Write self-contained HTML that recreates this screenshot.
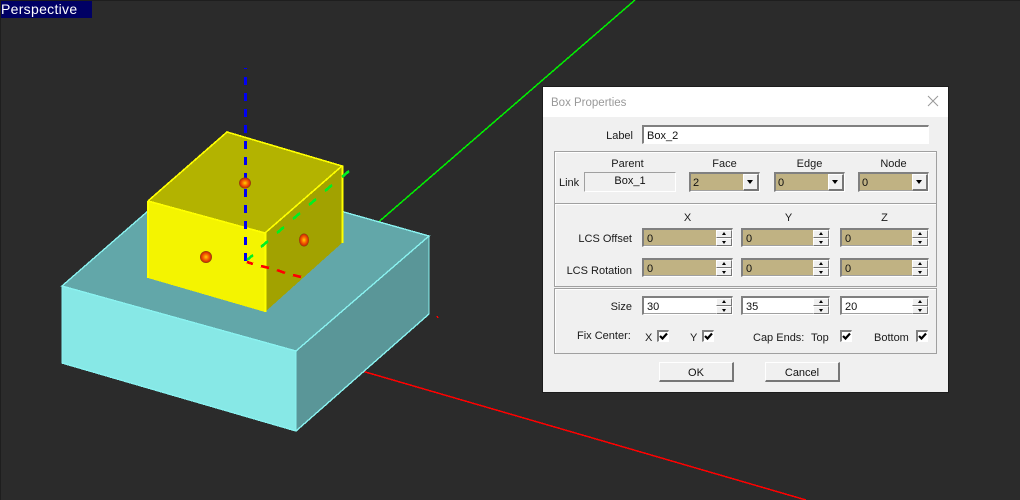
<!DOCTYPE html>
<html>
<head>
<meta charset="utf-8">
<style>
html,body{margin:0;padding:0;background:#2b2b2b}
#root{position:relative;width:1020px;height:500px;overflow:hidden;background:#2b2b2b;font-family:"Liberation Sans",sans-serif}
svg.scene{position:absolute;left:0;top:0}
.persp{position:absolute;left:1px;top:1px;width:91px;height:17px;background:#000064;color:#fff;font-size:14px;line-height:16px;letter-spacing:.3px;white-space:nowrap}
.dlg{position:absolute;left:543px;top:87px;width:405px;height:305px;background:#f0f0f0;box-shadow:0 0 0 1px #1c1c1c}
.title{position:absolute;left:0;top:0;width:405px;height:30px;background:#fff}
.title span{position:absolute;left:8px;top:9px;font-size:11.5px;line-height:14px;color:#999}
.t{position:absolute;font-size:11px;line-height:13px;color:#1a1a1a;white-space:nowrap}
.c{text-align:center}
.r{text-align:right}
.grp{position:absolute;box-sizing:border-box;border:1px solid #a0a0a0;box-shadow:inset 1px 1px 0 #fff}
.f{position:absolute;box-sizing:border-box;border-top:2px solid #808080;border-left:2px solid #808080;border-right:1px solid #fff;border-bottom:1px solid #fff;outline:0;font-size:11px;line-height:18px;color:#111;padding-left:3px;white-space:nowrap;overflow:hidden}
.sh{box-shadow:inset -1px -1px 0 #a0a0a0}
.tan{background:#c0b283}
.w{background:#fff}
.g{background:#f0f0f0}
.bt{position:absolute;box-sizing:border-box;background:#f0f0f0;border-top:1px solid #fff;border-left:1px solid #fff;border-right:1px solid #777;border-bottom:1px solid #777}
.dn:after{content:"";position:absolute;left:50%;top:50%;margin:-2px 0 0 -4px;border-left:3.5px solid transparent;border-right:3.5px solid transparent;border-top:4px solid #000}
.up2:after{content:"";position:absolute;left:50%;top:50%;margin:-2px 0 0 -2px;border-left:2px solid transparent;border-right:2px solid transparent;border-bottom:3px solid #000}
.dn2:after{content:"";position:absolute;left:50%;top:50%;margin:-1px 0 0 -2px;border-left:2px solid transparent;border-right:2px solid transparent;border-top:3px solid #000}
.cb{position:absolute;width:12px;height:12px;box-sizing:border-box;background:#fff;border-top:2px solid #808080;border-left:2px solid #808080;border-right:1px solid #fff;border-bottom:1px solid #fff}
.cb svg{position:absolute;left:0;top:0}
.btn{position:absolute;box-sizing:border-box;background:#f0f0f0;border-top:1px solid #fff;border-left:1px solid #fff;border-right:2px solid #777;border-bottom:2px solid #777;font-size:11px;line-height:20px;color:#111;text-align:center}
</style>
</head>
<body>
<div id="root">
<svg class="scene" width="1020" height="500" viewBox="0 0 1020 500">
  <rect x="0" y="0" width="1020" height="1" fill="#1e1e1e"/>
  <rect x="0" y="0" width="1" height="500" fill="#1e1e1e"/>
  <g shape-rendering="crispEdges">
    <line x1="300" y1="290" x2="635" y2="0" stroke="#00f000" stroke-width="1.5"/>
    <line x1="300" y1="353" x2="806" y2="500" stroke="#ff0000" stroke-width="1.5"/>
    <line x1="437" y1="316" x2="438" y2="318" stroke="#ff0000" stroke-width="1.5"/>
    <polygon points="195,170 429,236 296,351 62,286" fill="#62a7a9"/>
    <polygon points="62,286 296,351 296,431 62,363" fill="#87e8e6"/>
    <polygon points="296,351 429,236 429,314 296,431" fill="#5a9698"/>
  </g>
  <g fill="none" stroke="#8af2f0" stroke-width="1.4" shape-rendering="crispEdges">
    <polygon points="195,170 429,236 296,351 62,286"/>
    <polyline points="429,236 429,314 296,431 62,363 62,286"/>
    <line x1="296" y1="351" x2="296" y2="431"/>
  </g>
  <g shape-rendering="crispEdges">
    <polygon points="227,132 342,166 265,233 148,201" fill="#b3b300"/>
    <polygon points="148,201 265,233 265,312 148,278" fill="#f4f400"/>
    <polygon points="265,233 342,166 342,243 265,312" fill="#a2a200"/>
  </g>
  <g fill="none" stroke="#ffff00" stroke-width="1.6" shape-rendering="crispEdges">
    <polyline points="148,201 227,132 342,166 265,233 148,201"/>
    <line x1="265.5" y1="233" x2="265.5" y2="312"/>
    <line x1="342.5" y1="166" x2="342.5" y2="243"/>
    <line x1="148" y1="201" x2="148" y2="278"/>
  </g>
  <line x1="245.5" y1="68" x2="245.5" y2="262" stroke="#0000f4" stroke-width="3" stroke-dasharray="8 8" stroke-dashoffset="7" shape-rendering="crispEdges"/>
  <g stroke="#00f020" stroke-width="2.6" fill="none" shape-rendering="crispEdges">
    <line x1="247" y1="260" x2="253" y2="255"/>
    <line x1="261" y1="247" x2="268" y2="241"/>
    <line x1="277" y1="233" x2="284" y2="227"/>
    <line x1="293" y1="219" x2="300" y2="213"/>
    <line x1="309" y1="205" x2="316" y2="199"/>
    <line x1="325" y1="191" x2="332" y2="185"/>
    <line x1="342" y1="177" x2="349" y2="171"/>
  </g>
  <g stroke="#ff0000" stroke-width="2.6" fill="none" shape-rendering="crispEdges">
    <line x1="247" y1="262" x2="253" y2="264"/>
    <line x1="261" y1="266" x2="269" y2="268"/>
    <line x1="277" y1="270" x2="285" y2="273"/>
    <line x1="293" y1="275" x2="301" y2="277"/>
  </g>
  <defs>
    <radialGradient id="b"><stop offset="0" stop-color="#ffd000"/><stop offset=".5" stop-color="#f56000"/><stop offset=".85" stop-color="#d03000"/><stop offset="1" stop-color="#6e4a10"/></radialGradient>
  </defs>
  <ellipse cx="245" cy="183" rx="6" ry="5.5" fill="url(#b)"/>
  <ellipse cx="206" cy="257" rx="6" ry="6" fill="url(#b)"/>
  <ellipse cx="304" cy="240" rx="5" ry="6.5" fill="url(#b)"/>
</svg>
<div class="persp">Perspective</div>

<div class="dlg">
  <div class="title"><span>Box Properties</span>
    <svg style="position:absolute;left:384px;top:8px" width="12" height="12" viewBox="0 0 12 12"><path d="M1 1L11 11M11 1L1 11" stroke="#999" stroke-width="1" fill="none"/></svg>
  </div>

  <div class="t r" style="left:40px;top:43px;width:50px">Label</div>
  <div class="f w" style="left:99px;top:38px;width:287px;height:19px">Box_2</div>

  <div class="grp" style="left:11px;top:64px;width:383px;height:53px"></div>
  <div class="grp" style="left:11px;top:116px;width:383px;height:84px"></div>
  <div class="grp" style="left:11px;top:201px;width:383px;height:66px"></div>

  <div class="t c" style="left:39px;top:71px;width:91px">Parent</div>
  <div class="t c" style="left:146px;top:71px;width:71px">Face</div>
  <div class="t c" style="left:231px;top:71px;width:71px">Edge</div>
  <div class="t c" style="left:315px;top:71px;width:71px">Node</div>
  <div class="t" style="left:16px;top:90px">Link</div>
  <div class="f g" style="left:41px;top:85px;width:92px;height:20px;border:1px solid #a0a0a0;border-right-color:#fff;border-bottom-color:#fff;text-align:center;padding:0;line-height:16px">Box_1</div>

  <div class="f tan sh" style="left:146px;top:85px;width:71px;height:20px;line-height:19px;padding-left:2px">2<div class="bt dn" style="right:0;top:0;width:16px;height:17px;border-right:2px solid #777;border-bottom:2px solid #777"></div></div>
  <div class="f tan sh" style="left:231px;top:85px;width:71px;height:20px;line-height:19px;padding-left:2px">0<div class="bt dn" style="right:0;top:0;width:16px;height:17px;border-right:2px solid #777;border-bottom:2px solid #777"></div></div>
  <div class="f tan sh" style="left:315px;top:85px;width:71px;height:20px;line-height:19px;padding-left:2px">0<div class="bt dn" style="right:0;top:0;width:16px;height:17px;border-right:2px solid #777;border-bottom:2px solid #777"></div></div>

  <div class="t c" style="left:99px;top:125px;width:91px">X</div>
  <div class="t c" style="left:201px;top:125px;width:89px">Y</div>
  <div class="t c" style="left:297px;top:125px;width:89px">Z</div>

  <div class="t r" style="left:10px;top:146px;width:79px">LCS Offset</div>
  <div class="t r" style="left:10px;top:178px;width:79px">LCS Rotation</div>
  <div class="t r" style="left:10px;top:214px;width:79px">Size</div>

  <!-- row 1 -->
  <div class="f tan sh" style="left:99px;top:141px;width:91px;height:19px">0<div class="bt up2" style="right:0;top:0;width:16px;height:8px"></div><div class="bt dn2" style="right:0;top:8px;width:16px;height:8px"></div></div>
  <div class="f tan sh" style="left:198px;top:141px;width:89px;height:19px">0<div class="bt up2" style="right:0;top:0;width:16px;height:8px"></div><div class="bt dn2" style="right:0;top:8px;width:16px;height:8px"></div></div>
  <div class="f tan sh" style="left:297px;top:141px;width:89px;height:19px">0<div class="bt up2" style="right:0;top:0;width:16px;height:8px"></div><div class="bt dn2" style="right:0;top:8px;width:16px;height:8px"></div></div>
  <!-- row 2 -->
  <div class="f tan sh" style="left:99px;top:171px;width:91px;height:19px">0<div class="bt up2" style="right:0;top:0;width:16px;height:8px"></div><div class="bt dn2" style="right:0;top:8px;width:16px;height:8px"></div></div>
  <div class="f tan sh" style="left:198px;top:171px;width:89px;height:19px">0<div class="bt up2" style="right:0;top:0;width:16px;height:8px"></div><div class="bt dn2" style="right:0;top:8px;width:16px;height:8px"></div></div>
  <div class="f tan sh" style="left:297px;top:171px;width:89px;height:19px">0<div class="bt up2" style="right:0;top:0;width:16px;height:8px"></div><div class="bt dn2" style="right:0;top:8px;width:16px;height:8px"></div></div>
  <!-- row 3 -->
  <div class="f w sh" style="left:99px;top:209px;width:91px;height:19px">30<div class="bt up2" style="right:0;top:0;width:16px;height:8px"></div><div class="bt dn2" style="right:0;top:8px;width:16px;height:8px"></div></div>
  <div class="f w sh" style="left:198px;top:209px;width:89px;height:19px">35<div class="bt up2" style="right:0;top:0;width:16px;height:8px"></div><div class="bt dn2" style="right:0;top:8px;width:16px;height:8px"></div></div>
  <div class="f w sh" style="left:297px;top:209px;width:89px;height:19px">20<div class="bt up2" style="right:0;top:0;width:16px;height:8px"></div><div class="bt dn2" style="right:0;top:8px;width:16px;height:8px"></div></div>

  <div class="t" style="left:34px;top:243px">Fix Center:</div>
  <div class="t" style="left:102px;top:245px">X</div>
  <div class="cb" style="left:114px;top:243px"><svg width="9" height="9" viewBox="0 0 9 9"><path d="M1 4L3.5 6.5L8 1.5" stroke="#000" stroke-width="2.2" fill="none"/></svg></div>
  <div class="t" style="left:147px;top:245px">Y</div>
  <div class="cb" style="left:159px;top:243px"><svg width="9" height="9" viewBox="0 0 9 9"><path d="M1 4L3.5 6.5L8 1.5" stroke="#000" stroke-width="2.2" fill="none"/></svg></div>
  <div class="t" style="left:210px;top:245px">Cap Ends:</div>
  <div class="t" style="left:268px;top:245px">Top</div>
  <div class="cb" style="left:297px;top:243px"><svg width="9" height="9" viewBox="0 0 9 9"><path d="M1 4L3.5 6.5L8 1.5" stroke="#000" stroke-width="2.2" fill="none"/></svg></div>
  <div class="t" style="left:331px;top:245px">Bottom</div>
  <div class="cb" style="left:373px;top:243px"><svg width="9" height="9" viewBox="0 0 9 9"><path d="M1 4L3.5 6.5L8 1.5" stroke="#000" stroke-width="2.2" fill="none"/></svg></div>

  <div class="btn" style="left:116px;top:275px;width:75px;height:20px">OK</div>
  <div class="btn" style="left:222px;top:275px;width:75px;height:20px">Cancel</div>
</div>
</div>
</body>
</html>
